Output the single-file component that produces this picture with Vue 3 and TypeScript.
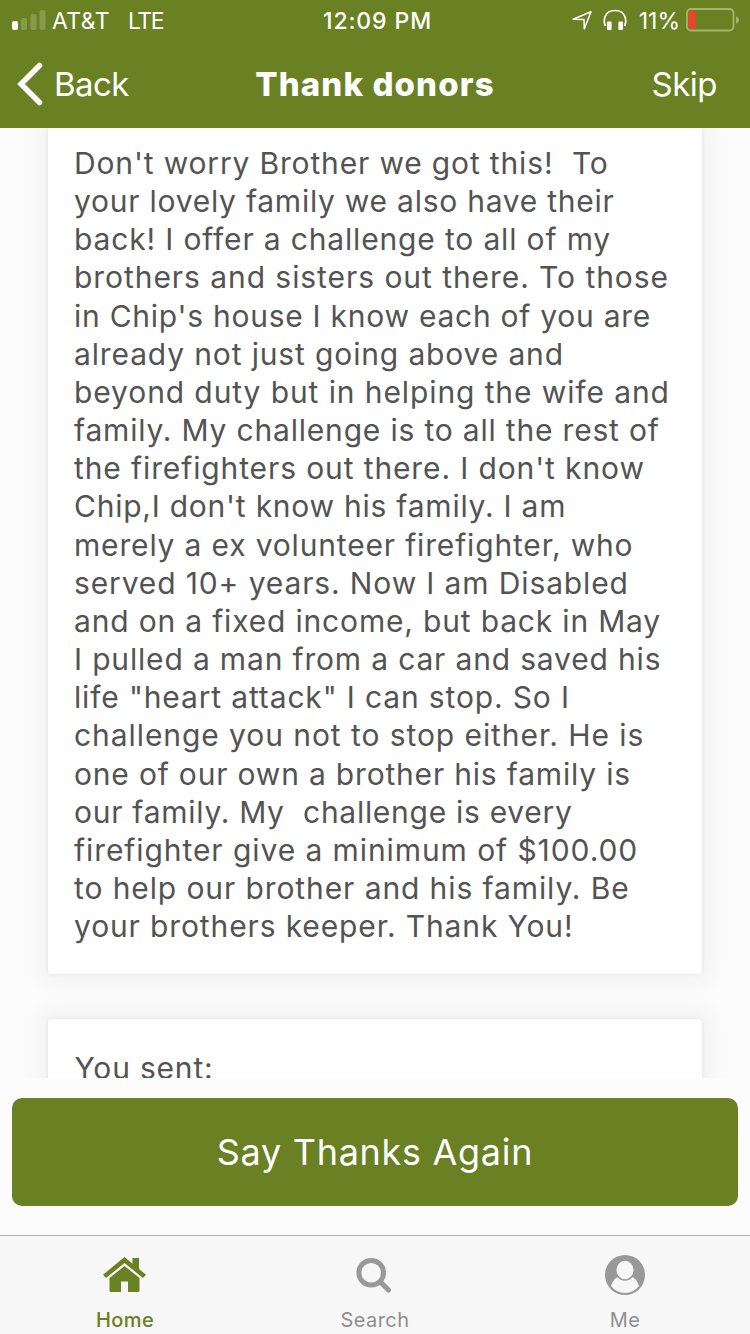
<script setup lang="ts">
interface Tab {
  id: 'home' | 'search' | 'me'
  label: string
}

interface Line {
  text: string
  tracking: number
}

const tabs: Tab[] = [
  { id: 'home', label: 'Home' },
  { id: 'search', label: 'Search' },
  { id: 'me', label: 'Me' },
]
const activeTab: Tab['id'] = 'home'

const message: Line[] = [
  { text: "Don't worry Brother we got this!  To", tracking: 0.84 },
  { text: 'your lovely family we also have their', tracking: 0.75 },
  { text: 'back! I offer a challenge to all of my', tracking: 0.84 },
  { text: 'brothers and sisters out there. To those', tracking: 0.94 },
  { text: "in Chip's house I know each of you are", tracking: 0.74 },
  { text: 'already not just going above and', tracking: 0.86 },
  { text: 'beyond duty but in helping the wife and', tracking: 0.9 },
  { text: 'family. My challenge is to all the rest of', tracking: 0.81 },
  { text: "the firefighters out there. I don't know", tracking: 0.88 },
  { text: "Chip,I don't know his family. I am", tracking: 0.76 },
  { text: 'merely a ex volunteer firefighter, who', tracking: 0.83 },
  { text: 'served 10+ years. Now I am Disabled', tracking: 0.87 },
  { text: 'and on a fixed income, but back in May', tracking: 0.82 },
  { text: 'I pulled a man from a car and saved his', tracking: 0.83 },
  { text: 'life "heart attack" I can stop. So I', tracking: 0.85 },
  { text: 'challenge you not to stop either. He is', tracking: 0.93 },
  { text: 'one of our own a brother his family is', tracking: 0.81 },
  { text: 'our family. My  challenge is every', tracking: 0.72 },
  { text: 'firefighter give a minimum of $100.00', tracking: 0.92 },
  { text: 'to help our brother and his family. Be', tracking: 0.9 },
  { text: 'your brothers keeper. Thank You!', tracking: 0.87 },
]
</script>

<template>
  <div class="screen">
    <header class="top">
      <div class="status">
        <div class="status-left">
          <svg class="signal" width="34" height="20" viewBox="0 0 34 20">
            <rect x="0" y="11" width="6" height="9" rx="2" fill="#fff" />
            <g fill="#859b4c">
              <rect x="9" y="8" width="6" height="12" rx="2" />
              <rect x="18.500" y="4" width="6" height="16" rx="2" />
              <rect x="27.500" y="0" width="6" height="20" rx="2" />
            </g>
          </svg>
          <span class="carrier">AT&amp;T</span>
          <span class="network">LTE</span>
        </div>
        <span class="clock">12:09 PM</span>
        <div class="status-right">
          <svg class="location" width="21" height="21" viewBox="0 0 21 21">
            <path d="M1.200 9.300 L19 1.800 L12.300 19 L12 9.500 Z" fill="none" stroke="#fff" stroke-width="1.500" stroke-linejoin="round" />
          </svg>
          <svg class="phones" width="24" height="22" viewBox="0 0 24 22">
            <path d="M2.500 17 C0 12 1 1.500 12 1.500 S24 12 21.500 17" fill="none" stroke="#fff" stroke-width="1.700" />
            <rect x="4" y="12.500" width="4.600" height="8.500" rx="1" fill="#fff" />
            <rect x="15.400" y="12.500" width="4.600" height="8.500" rx="1" fill="#fff" />
          </svg>
          <span class="percent">11%</span>
          <svg class="battery" width="54" height="24" viewBox="0 0 54 24">
            <rect x="1" y="1" width="46.500" height="21.500" rx="4" fill="none" stroke="#a3b573" stroke-width="1.800" />
            <rect x="2.800" y="2.800" width="6.700" height="18" rx="1.500" fill="#fb3d2c" />
            <path d="M50 8.500 Q53 9.500 53 12 T50 15.500 Z" fill="#a3b573" />
          </svg>
        </div>
      </div>
      <nav class="nav">
        <button class="back" type="button">
          <svg width="27" height="44" viewBox="0 0 27 44">
            <path d="M22.500 3.500 L4 22 L22.500 40.500" fill="none" stroke="#fff" stroke-width="5.500" stroke-linecap="round" stroke-linejoin="miter" />
          </svg>
          <span>Back</span>
        </button>
        <h1 class="title">Thank donors</h1>
        <button class="skip" type="button">Skip</button>
      </nav>
    </header>

    <main class="content">
      <section class="card card-message">
        <p
          v-for="(line, i) in message"
          :key="i"
          class="line"
          :style="{ letterSpacing: `${line.tracking}px` }"
        >{{ line.text }}</p>
      </section>
      <section class="card card-sent">
        <p class="line">You sent:</p>
      </section>
    </main>

    <div class="action">
      <button class="thanks" type="button">Say Thanks Again</button>
    </div>

    <footer class="tabs">
      <div v-for="tab in tabs" :key="tab.id" class="tab" :class="{ active: tab.id === activeTab }">
        <svg v-if="tab.id === 'home'" width="44" height="40" viewBox="0.500 0 44 40" fill="currentColor">
          <path d="M22 2 L30 8.700 V3 H36.500 V14 L43.500 19.800 L40.500 23 L22 8 L3.500 23 L0.500 19.800 Z" />
          <path d="M22 11 L37 23 V35.500 Q37 37 35.500 37 H25.500 V26.500 H18.500 V37 H8.500 Q7 37 7 35.500 V23 Z" />
        </svg>
        <svg v-else-if="tab.id === 'search'" width="44" height="40" viewBox="0 0 44 40" fill="none" stroke="currentColor">
          <circle cx="18.200" cy="17.700" r="12.300" stroke-width="5" />
          <path d="M27.500 27 L35.500 35" stroke-width="5.200" stroke-linecap="round" />
        </svg>
        <svg v-else width="44" height="40" viewBox="0 0 44 40">
          <circle cx="22" cy="20" r="20" fill="currentColor" />
          <path d="M8 31 Q10.500 22.500 16.500 21.500 H27.500 Q33.500 22.500 36 31 Q30.500 38 22 38 T8 31 Z" fill="#f7f7f7" />
          <ellipse cx="22" cy="15" rx="9.300" ry="10" fill="#f7f7f7" stroke="currentColor" stroke-width="1.500" />
        </svg>
        <span class="tab-label">{{ tab.label }}</span>
      </div>
    </footer>
  </div>
</template>

<style>
body {
  margin: 0;
  overflow: hidden;
}
</style>

<style scoped>
.screen {
  width: 750px;
  height: 1334px;
  display: flex;
  flex-direction: column;
  overflow: hidden;
  background: #fcfcfc;
  font-family: Inter, "Liberation Sans", sans-serif;
  font-kerning: normal;
}

button {
  margin: 0;
  padding: 0;
  border: 0;
  background: none;
  color: inherit;
  font: inherit;
}

.top {
  flex: none;
  height: 128px;
  background: #698023;
  color: #fff;
}

.status {
  height: 40px;
  display: grid;
  grid-template-columns: 1fr auto 1fr;
  align-items: center;
  font-size: 23px;
  line-height: 42px;
}

.status-left {
  display: flex;
  align-items: center;
  padding-left: 12px;
}

.status svg {
  margin-bottom: 2px;
}

.carrier {
  margin-left: 6px;
  letter-spacing: 0.4px;
}

.network {
  margin-left: 18px;
  letter-spacing: -1.4px;
}

.clock {
  padding-left: 5px;
  font-weight: 500;
  letter-spacing: 0.9px;
}

.status-right {
  display: flex;
  align-items: center;
  justify-content: flex-end;
  padding-right: 10px;
}

.phones {
  margin-left: 10px;
}

.percent {
  margin-left: 12px;
  letter-spacing: 0;
}

.battery {
  margin-left: 6px;
}

.nav {
  height: 88px;
  display: grid;
  grid-template-columns: 1fr auto 1fr;
  align-items: center;
  font-size: 33px;
}

.back {
  display: flex;
  align-items: center;
  padding-left: 17px;
}

.back span {
  margin-left: 10px;
  letter-spacing: -0.6px;
}

.title {
  margin: 0;
  font-size: 33px;
  font-weight: 800;
  letter-spacing: 1.1px;
}

.skip {
  justify-self: end;
  padding-right: 33px;
  letter-spacing: -0.5px;
}

.content {
  flex: none;
  height: 950px;
  overflow: hidden;
}

.card {
  box-sizing: border-box;
  width: 654px;
  margin-left: 48px;
  padding-left: 26px;
  background: #fff;
  box-shadow: 0 0 4px rgba(0, 0, 0, 0.09), 0 0 22px 12px rgba(0, 0, 0, 0.035);
}

/* Keeps the next card's shadow underneath this card. */
.card-message {
  position: relative;
  height: 846px;
  padding-top: 16px;
  border-radius: 0 0 4px 4px;
}

.card-sent {
  height: 160px;
  margin-top: 45px;
  padding-top: 30px;
  border-radius: 4px;
  position: relative;
}

.card-message {
  z-index: 1;
}

.line {
  margin: 0;
  color: #535353;
  font-size: 30px;
  line-height: 38.15px;
  letter-spacing: 0.8px;
  white-space: pre;
}

.card-sent .line {
  margin-left: 0.5px;
}

.action {
  flex: none;
  height: 157px;
  box-sizing: border-box;
  padding: 20px 12px 0;
}

.thanks {
  display: block;
  width: 726px;
  height: 108px;
  border-radius: 10px;
  background: #698023;
  color: #fff;
  font-size: 36px;
  letter-spacing: 0.7px;
}

.tabs {
  flex: 1;
  box-sizing: border-box;
  display: grid;
  grid-template-columns: repeat(3, 1fr);
  border-top: 1px solid #b2b2b5;
  background: #f7f7f7;
}

.tab {
  display: flex;
  flex-direction: column;
  align-items: center;
  padding-top: 19px;
  color: #999;
}

.tab.active {
  color: #698023;
}

.tab-label {
  margin-top: 13px;
  color: #8f8f8f;
  font-size: 20px;
  line-height: 24px;
  letter-spacing: 0.4px;
}

.tab.active .tab-label {
  color: inherit;
  font-weight: 500;
}
</style>
